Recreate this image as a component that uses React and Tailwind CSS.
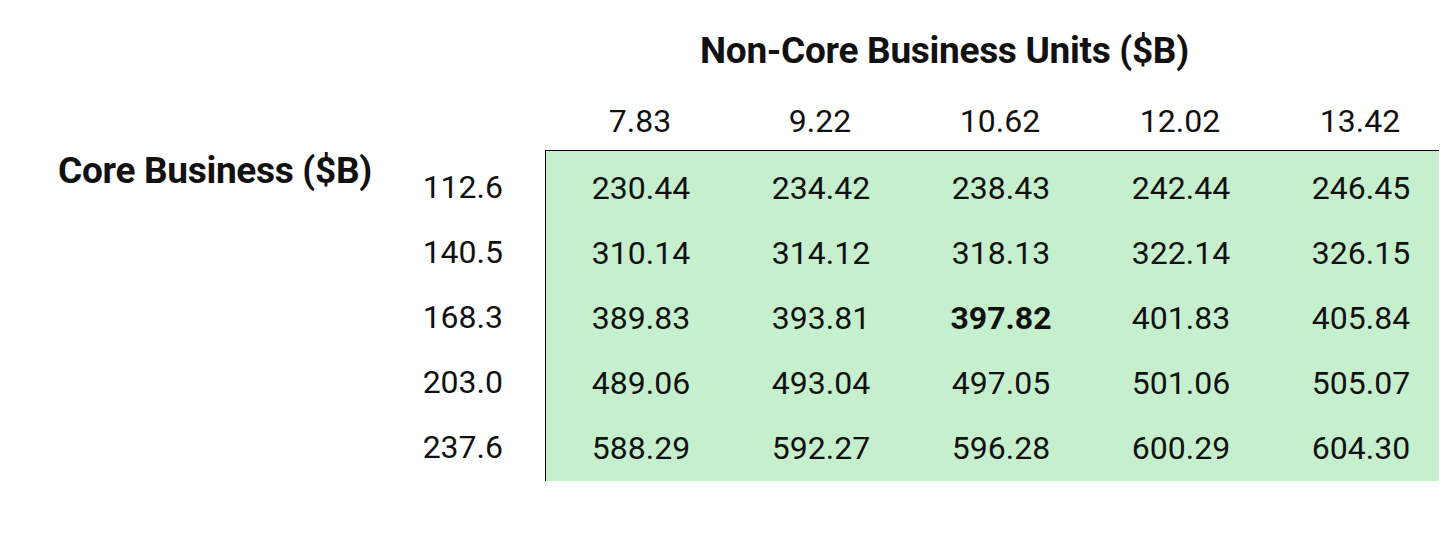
export default function App() {
  const cols = ["7.83", "9.22", "10.62", "12.02", "13.42"];
  const rows = [
    ["112.6", ["230.44", "234.42", "238.43", "242.44", "246.45"]],
    ["140.5", ["310.14", "314.12", "318.13", "322.14", "326.15"]],
    ["168.3", ["389.83", "393.81", "397.82", "401.83", "405.84"]],
    ["203.0", ["489.06", "493.04", "497.05", "501.06", "505.07"]],
    ["237.6", ["588.29", "592.27", "596.28", "600.29", "604.30"]],
  ];
  return (
    <div className="w-[1456px] h-[533px] bg-white text-[#111] font-['Roboto',sans-serif] overflow-hidden">
      <div className="pt-[31px] h-[72px]">
        <div className="ml-[700px] h-[40px] leading-[40px] text-[37px] font-bold tracking-[-0.3px] whitespace-nowrap">
          Non-Core Business Units ($B)
        </div>
      </div>
      <div className="flex h-[78px] items-center pt-[20px] ml-[550px]">
        {cols.map((c) => (
          <div key={c} className="w-[180px] text-center text-[32px] leading-[40px]">
            {c}
          </div>
        ))}
      </div>
      <div className="flex">
        <div className="w-[420px] pl-[58px] pt-[1px]">
          <div className="text-[37px] leading-[40px] font-bold whitespace-nowrap tracking-[-0.3px]">
            Core Business ($B)
          </div>
        </div>
        <div className="w-[125px] pr-[42px] pt-[5px]">
          {rows.map(([r]) => (
            <div key={r} className="h-[65px] leading-[65px] text-right text-[32px]">
              {r}
            </div>
          ))}
        </div>
        <div className="w-[894px] bg-[#c6efce] border-l border-t border-black pl-[5px] pt-[4px] pb-[1px]">
          {rows.map(([r, vals]) => (
            <div key={r} className="flex h-[65px] items-center">
              {vals.map((v, i) => (
                <div
                  key={i}
                  className={`w-[180px] shrink-0 text-center text-[32px] leading-[40px] ${
                    v === "397.82" ? "font-bold" : ""
                  }`}
                >
                  {v}
                </div>
              ))}
            </div>
          ))}
        </div>
      </div>
    </div>
  );
}
